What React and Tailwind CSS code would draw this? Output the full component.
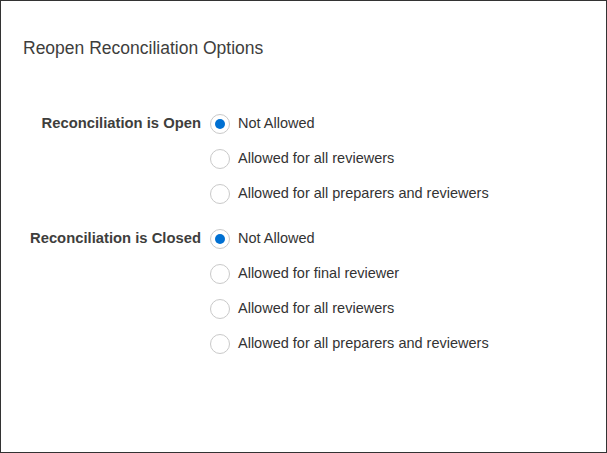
import React from "react";

function Radio({ checked, label }) {
  return (
    <div className="flex h-[35px] items-center">
      <span className="flex h-[20px] w-[20px] shrink-0 items-center justify-center rounded-full border border-[#c9c9c9] bg-white">
        {checked && <span className="h-[10px] w-[10px] rounded-full bg-[#0070d2]" />}
      </span>
      <span className="ml-[8px] text-[14.5px] text-[#333333] whitespace-nowrap">
        {label}
      </span>
    </div>
  );
}

function Group({ label, options, selected, className = "" }) {
  return (
    <div className={"flex " + className}>
      <div className="flex h-[35px] w-[200px] shrink-0 items-center justify-end text-[14.8px] font-bold text-[#3e3e3c] whitespace-nowrap">
        {label}
      </div>
      <div className="ml-[9px] flex flex-col">
        {options.map((o, i) => (
          <Radio key={o} label={o} checked={i === selected} />
        ))}
      </div>
    </div>
  );
}

export default function App() {
  return (
    <div
      className="h-[453px] w-[607px] border border-[#333333] bg-white"
      style={{ fontFamily: '"Liberation Sans", Arial, sans-serif' }}
    >
      <div className="pl-[22px] pt-[35px] text-[17.5px] leading-[24px] text-[#3e3e3c]">
        Reopen Reconciliation Options
      </div>
      <div className="mt-[46px]">
        <Group
          label="Reconciliation is Open"
          selected={0}
          options={["Not Allowed", "Allowed for all reviewers", "Allowed for all preparers and reviewers"]}
        />
        <Group
          className="mt-[10px]"
          label="Reconciliation is Closed"
          selected={0}
          options={[
            "Not Allowed",
            "Allowed for final reviewer",
            "Allowed for all reviewers",
            "Allowed for all preparers and reviewers",
          ]}
        />
      </div>
    </div>
  );
}
